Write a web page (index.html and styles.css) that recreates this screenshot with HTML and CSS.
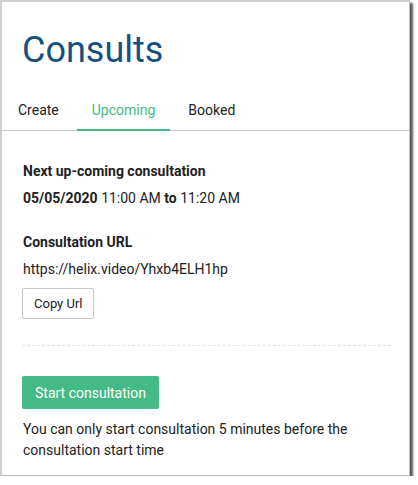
FILE: index.html
```html
<!doctype html>
<html lang="en">
  <head>
    <meta charset="UTF-8" />
    <meta name="viewport" content="width=device-width, initial-scale=1.0" />
    <title>Consults</title>
    <link rel="stylesheet" href="styles.css">
  </head>
  <body>
    <div class="consults-card">
      <h1 class="page-title">Consults</h1>

      <nav class="tabs">
        <a class="tab" href="#">Create</a>
        <a class="tab active" href="#">Upcoming</a>
        <a class="tab" href="#">Booked</a>
      </nav>

      <div class="tab-body">
        <div class="section">
          <h2 class="section-title">Next up-coming consultation</h2>
          <p class="slot"><b>05/05/2020</b> 11:00 AM <b>to</b> 11:20 AM</p>
        </div>

        <div class="section">
          <h2 class="section-title">Consultation URL</h2>
          <p class="url">https://helix.video/Yhxb4ELH1hp</p>
          <button class="btn-outline" type="button">Copy Url</button>
        </div>

        <hr class="divider" />

        <button class="btn-start" type="button">Start consultation</button>
        <p class="hint">You can only start consultation 5 minutes before the consultation start time</p>
      </div>
    </div>
  </body>
</html>
```

FILE: styles.css
```css
body {
  margin: 0;
  font-family: Roboto, "Liberation Sans", Arial, sans-serif;
  font-size: 14px;
  color: #222;
  background: #fff;
}
.consults-card {
  box-sizing: border-box;
  width: 410px;
  height: 476px;
  background: #fff;
  border-top: 2px solid #cfcfcf;
  border-left: 2px solid #cfcfcf;
  border-right: 1px solid #bbb;
  border-bottom: 1px solid #bbb;
  box-shadow: 3px 3px 2px rgba(0, 0, 0, 0.65);
}
.page-title {
  margin: 0;
  padding: 27px 0 0 20px;
  font-size: 36px;
  font-weight: 400;
  line-height: 42px;
  color: #17507f;
}
.tabs {
  display: flex;
  gap: 3px;
  margin-top: 31px;
  padding-left: 1px;
  border-bottom: 1px solid #c8c8c8;
}
.tab {
  padding: 0 15px 10px;
  line-height: 17px;
  color: #222;
  text-decoration: none;
  border-bottom: 2px solid transparent;
  margin-bottom: -1px;
}
.tab.active {
  color: #45b98a;
  border-bottom-color: #45b98a;
}
.tab-body {
  padding: 32px 18px 0 21px;
}
.section {
  margin-bottom: 27px;
}
.section-title {
  margin: 0 0 10px;
  font-size: 14px;
  font-weight: 700;
  line-height: 17px;
}
.slot,
.url {
  margin: 0;
  line-height: 17px;
}
.url {
  margin-bottom: 10px;
}
.btn-outline {
  font-family: inherit;
  font-size: 13px;
  color: #222;
  background: #fff;
  border: 1px solid #c8c8c8;
  border-radius: 2px;
  padding: 0 11px;
  height: 31px;
  margin-left: -1px;
  display: block;
}
.section:nth-of-type(2) {
  margin-bottom: 26px;
}
.divider {
  border: none;
  border-top: 1px dashed #e4e4e4;
  margin: 0 0 30px -1px;
}
.btn-start {
  display: block;
  font-family: inherit;
  font-size: 14px;
  color: #fff;
  background: #43ba87;
  border: none;
  border-radius: 2px;
  padding: 0 13px;
  height: 33px;
  margin-left: -1px;
}
.hint {
  margin: 10px 0 0;
  line-height: 21px;
}
```
